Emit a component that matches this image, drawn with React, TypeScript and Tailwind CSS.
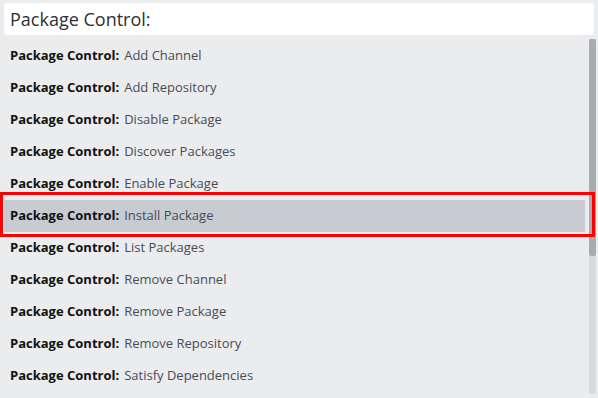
const commands = [
  "Add Channel",
  "Add Repository",
  "Disable Package",
  "Discover Packages",
  "Enable Package",
  "Install Package",
  "List Packages",
  "Remove Channel",
  "Remove Package",
  "Remove Repository",
  "Satisfy Dependencies",
];

const selected = 5;

function App() {
  return (
    <div className="w-[598px] h-[398px] overflow-hidden bg-[#ebecee] font-['Open_Sans',sans-serif]">
      <div className="mx-[4px] mt-[3px] h-[32px] rounded-[3px] bg-white pl-[6px] flex items-center text-[18px] text-[#2b2f36]">
        Package Control:
      </div>

      <div className="flex mt-[5px] pl-[4px] pr-[2px]">
        <div className="w-[581px]">
          {commands.map((cmd, i) => (
            <div
              key={cmd}
              className={
                i === selected
                  ? "relative h-[32px] flex items-center pl-[6px] text-[13px] bg-[#c8cbd2]"
                  : "relative h-[32px] flex items-center pl-[6px] text-[13px]"
              }
            >
              <span className="font-bold text-[#111]">Package Control:</span>
              <span className="ml-[5px] text-[#474c57]">{cmd}</span>
              {i === selected && (
                <div className="absolute -left-[4px] -top-[8px] w-[595px] h-[45px] border-[3px] border-[#ff0000]" />
              )}
            </div>
          ))}
        </div>
        <div className="ml-[4px] w-[7px] h-[355px] -mt-[1px] rounded-[2px] bg-[#d7d9dc] flex flex-col">
          <div className="h-[217px] rounded-[2px] bg-[#a9abb1]" />
        </div>
      </div>
    </div>
  );
}

export default App;
